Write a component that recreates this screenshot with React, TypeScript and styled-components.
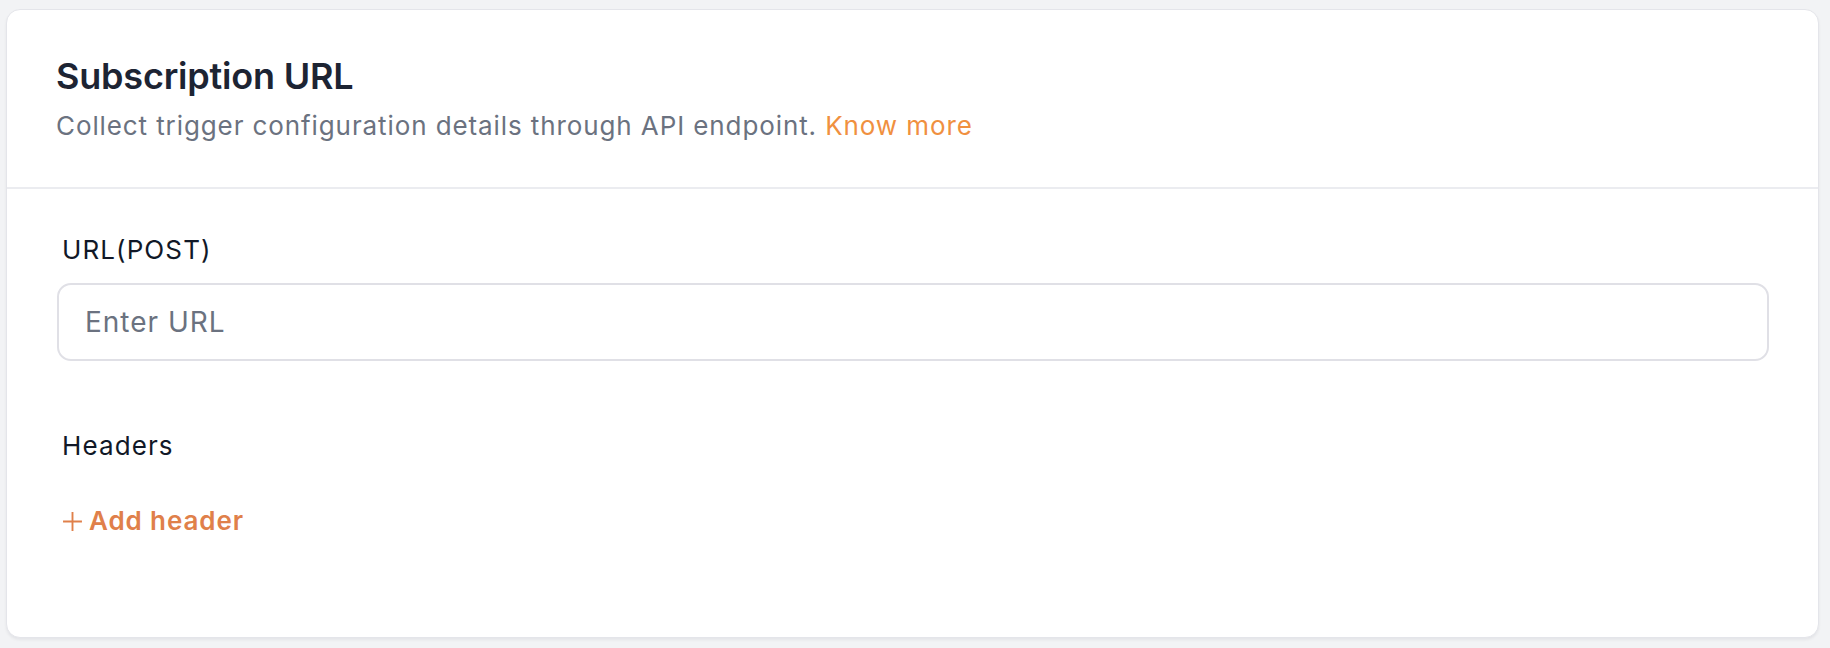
import styled, { createGlobalStyle } from "styled-components";

const GlobalStyle = createGlobalStyle`
  html, body {
    margin: 0;
    padding: 0;
    background: #f2f3f5;
    font-family: Inter, "Noto Sans", sans-serif;
  }
`;

function App() {
  return (
    <Page>
      <GlobalStyle />
      <Card>
        <CardHeader>
          <Title>Subscription URL</Title>
          <Subtitle>
            Collect trigger configuration details through API endpoint.{" "}
            <KnowMore href="#">Know more</KnowMore>
          </Subtitle>
        </CardHeader>
        <CardBody>
          <Field>
            <Label>URL(POST)</Label>
            <UrlInput placeholder="Enter URL" />
          </Field>
          <Field>
            <Label>Headers</Label>
            <AddButton type="button">
              <PlusIcon viewBox="0 0 20 20">
                <path d="M10 1v18M1 10h18" />
              </PlusIcon>
              Add header
            </AddButton>
          </Field>
        </CardBody>
      </Card>
    </Page>
  );
}
export default App;

const Page = styled.div`
  padding: 9px 11px 10px 6px;
  min-height: 648px;
  box-sizing: border-box;
`;

const Card = styled.div`
  background: #fff;
  border: 1.5px solid #e4e5ea;
  border-radius: 14px;
  box-shadow: 0 2px 3px rgba(20, 24, 40, 0.06);
  height: 629px;
  box-sizing: border-box;
`;

const CardHeader = styled.div`
  padding: 44px 49px 43px;
  border-bottom: 2px solid #ebecf0;
`;

const Title = styled.h2`
  margin: 0;
  font-size: 36px;
  line-height: 44px;
  font-weight: 600;
  color: #1d2433;
  letter-spacing: -0.2px;
`;

const Subtitle = styled.p`
  margin: 10px 0 0;
  font-size: 26px;
  line-height: 36px;
  letter-spacing: 0.9px;
  color: #6b7280;
`;

const KnowMore = styled.a`
  color: #f0903f;
  text-decoration: none;
`;

const CardBody = styled.div`
  padding: 45px 49px 0 50px;
  display: flex;
  flex-direction: column;
  gap: 69px;
`;

const Field = styled.div`
  display: flex;
  flex-direction: column;
  gap: 17px;

  & + & {
    gap: 43px;
  }
`;

const Label = styled.label`
  padding-left: 5px;
  font-size: 26px;
  line-height: 32px;
  letter-spacing: 1.1px;
  color: #111827;
`;

const UrlInput = styled.input`
  height: 78px;
  box-sizing: border-box;
  border: 2px solid #e0e0e6;
  border-radius: 14px;
  padding: 0 26px;
  font-family: inherit;
  font-size: 28px;
  letter-spacing: 1px;
  color: #111827;
  outline: none;

  &::placeholder {
    color: #6b7280;
  }
`;

const AddButton = styled.button`
  align-self: flex-start;
  display: flex;
  align-items: center;
  gap: 6px;
  margin-left: 5px;
  padding: 0;
  border: none;
  background: none;
  font-family: inherit;
  font-size: 26px;
  line-height: 32px;
  letter-spacing: 0.9px;
  font-weight: 600;
  color: #e0804a;
  cursor: pointer;
`;

const PlusIcon = styled.svg`
  width: 21px;
  height: 21px;
  fill: none;
  stroke: currentColor;
  stroke-width: 1.8;
`;
